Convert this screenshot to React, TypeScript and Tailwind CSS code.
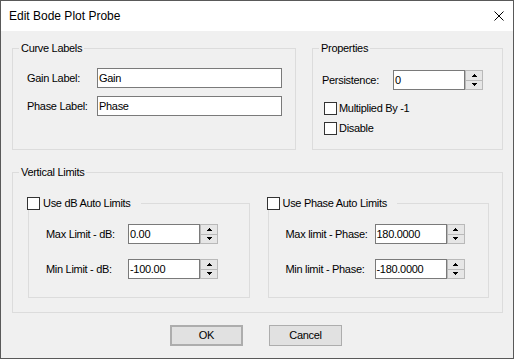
import React from "react";

function Arrow({ up }: { up: boolean }) {
  return (
    <svg width="5" height="3" viewBox="0 0 5 3" shapeRendering="crispEdges">
      {up ? (
        <>
          <rect x="2" y="0" width="1" height="1" fill="#000" />
          <rect x="1" y="1" width="3" height="1" fill="#000" />
          <rect x="0" y="2" width="5" height="1" fill="#000" />
        </>
      ) : (
        <>
          <rect x="0" y="0" width="5" height="1" fill="#000" />
          <rect x="1" y="1" width="3" height="1" fill="#000" />
          <rect x="2" y="2" width="1" height="1" fill="#000" />
        </>
      )}
    </svg>
  );
}

function Spinner() {
  return (
    <div className="flex h-[20px] w-[18px] flex-col border border-[#b9b9b9] bg-[#f0f0f0]">
      <div className="flex flex-1 items-center justify-center border-b border-[#b9b9b9] bg-[#e6e6e6]">
        <Arrow up />
      </div>
      <div className="flex flex-1 items-center justify-center bg-[#e6e6e6]">
        <Arrow up={false} />
      </div>
    </div>
  );
}

function NumField({ value }: { value: string }) {
  return (
    <div className="flex">
      <div className="flex h-[20px] w-[72px] items-center border border-[#7a7a7a] bg-white pl-[1px] leading-[13px]">
        {value}
      </div>
      <Spinner />
    </div>
  );
}

function Check() {
  return <div className="h-[13px] w-[13px] shrink-0 border border-[#333333] bg-white" />;
}

function TextField({ value }: { value: string }) {
  return (
    <div className="flex h-[20px] w-[185px] items-center border border-[#7a7a7a] bg-white pl-[1px] leading-[13px]">
      {value}
    </div>
  );
}

function LimitGroup({
  title,
  labelW,
  rows,
}: {
  title: string;
  labelW: string;
  rows: [string, string][];
}) {
  return (
    <fieldset className="h-[101px] flex-1 border border-[#dcdcdc] p-0">
      <legend className="ml-[-2px] flex h-[13px] items-center gap-[3px] pr-[10px] leading-[13px]">
        <Check />
        <span>{title}</span>
      </legend>
      <div className="flex flex-col gap-[15px] pl-[17px] pt-[14px]">
        {rows.map(([l, v]) => (
          <div key={l} className="flex items-center">
            <div className={labelW}>{l}</div>
            <NumField value={v} />
          </div>
        ))}
      </div>
    </fieldset>
  );
}

export default function App() {
  return (
    <div className="h-[359px] w-[514px] font-['Liberation_Sans',Arial,sans-serif] text-[11px] tracking-[-0.3px] text-black">
      <div className="flex h-full flex-col border border-[#595959] bg-[#f0f0f0]">
        <div className="flex h-[30px] shrink-0 items-center justify-between bg-white pl-[8px] pr-[9px] text-[12px] tracking-normal">
          <span>Edit Bode Plot Probe</span>
          <svg width="10" height="10" viewBox="0 0 10 10">
            <path d="M0.5 0.5 L9.5 9.5 M9.5 0.5 L0.5 9.5" stroke="#000" strokeWidth="1" />
          </svg>
        </div>
        <div className="flex flex-1 flex-col pl-[11px] pr-[10px]">
          <div className="mt-[11px] flex gap-[16px]">
            <fieldset className="h-[108px] w-[284px] border border-[#dcdcdc] p-0">
              <legend className="ml-[6px] px-[2px] leading-[13px]">Curve Labels</legend>
              <div className="flex flex-col gap-[8px] pl-[14px] pt-[13px]">
                <div className="flex items-center">
                  <div className="w-[70px]">Gain Label:</div>
                  <TextField value="Gain" />
                </div>
                <div className="flex items-center">
                  <div className="w-[70px]">Phase Label:</div>
                  <TextField value="Phase" />
                </div>
              </div>
            </fieldset>
            <fieldset className="h-[108px] w-[191px] border border-[#dcdcdc] p-0">
              <legend className="ml-[6px] px-[2px] leading-[13px]">Properties</legend>
              <div className="flex flex-col pl-[9px] pt-[15px]">
                <div className="flex items-center">
                  <div className="w-[71px]">Persistence:</div>
                  <NumField value="0" />
                </div>
                <div className="ml-[2px] mt-[12px] flex h-[13px] items-center gap-[2px] leading-[13px]">
                  <Check />
                  <span>Multiplied By -1</span>
                </div>
                <div className="ml-[2px] mt-[7px] flex h-[13px] items-center gap-[2px] leading-[13px]">
                  <Check />
                  <span>Disable</span>
                </div>
              </div>
            </fieldset>
          </div>
          <fieldset className="mt-[16px] h-[147px] border border-[#dcdcdc] p-0">
            <legend className="ml-[6px] px-[2px] leading-[13px]">Vertical Limits</legend>
            <div className="flex gap-[18px] pl-[15px] pr-[13px] pt-[18px]">
              <LimitGroup
                title="Use dB Auto Limits"
                labelW="w-[82px]"
                rows={[
                  ["Max Limit - dB:", "0.00"],
                  ["Min Limit - dB:", "-100.00"],
                ]}
              />
              <LimitGroup
                title="Use Phase Auto Limits"
                labelW="w-[89px]"
                rows={[
                  ["Max limit - Phase:", "180.0000"],
                  ["Min limit - Phase:", "-180.0000"],
                ]}
              />
            </div>
          </fieldset>
          <div className="mt-[12px] flex gap-[26px] pl-[158px]">
            <button className="flex h-[21px] w-[73px] items-center justify-center border-2 border-[#adadad] bg-[#e1e1e1] leading-[13px]">
              OK
            </button>
            <button className="flex h-[21px] w-[73px] items-center justify-center border border-[#adadad] bg-[#e1e1e1] leading-[13px]">
              Cancel
            </button>
          </div>
        </div>
      </div>
    </div>
  );
}
